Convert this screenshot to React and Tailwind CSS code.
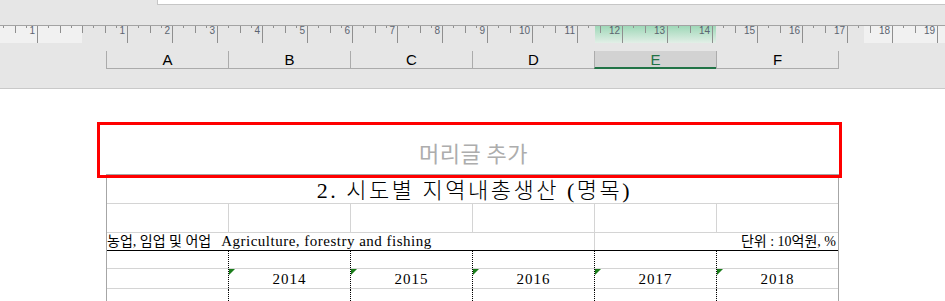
import React from "react";

const cols = ["A", "B", "C", "D", "E", "F"];
const years = ["2014", "2015", "2016", "2017", "2018"];

const serif = "font-['Liberation_Serif','Noto_Sans_CJK_KR',serif]";

// excel page-layout ruler: origin at the left margin, 45px per unit
function Ruler() {
  const ticks = [];
  for (let q = -7; q <= 79; q++) {
    const x = Math.round(82 + q * 11.25) + 0.5;
    if (x < 0 || x > 945) continue;
    let y2 = 3;
    if (q % 4 === 0 && q !== 0) y2 = 18;
    else if (q % 2 === 0) y2 = 8;
    ticks.push(<line key={q} x1={x} x2={x} y1={1} y2={y2} stroke="#8f8f8f" strokeWidth="1" />);
  }
  const labels = [{ n: 1, x: 35 }];
  for (let k = 1; k <= 19; k++) labels.push({ n: k, x: 82 + 45 * k - 2 });

  return (
    <svg width="945" height="19" className="block">
      <defs>
        <linearGradient id="sel" x1="0" y1="0" x2="0" y2="1">
          <stop offset="0" stopColor="#9fd8b8" />
          <stop offset="1" stopColor="#e2efe7" />
        </linearGradient>
      </defs>
      <rect x="0" y="1" width="82" height="17" fill="#f1f1f1" />
      <rect x="864" y="1" width="81" height="17" fill="#f1f1f1" />
      <rect x="595" y="1" width="121" height="17" fill="url(#sel)" />
      <line x1="0" x2="945" y1="0.5" y2="0.5" stroke="#a3a3a3" />
      {ticks}
      {labels.map((l, i) => (
        <text key={i} x={l.x} y="9" textAnchor="end" fontSize="10" fill="#5c6470" fontFamily="Liberation Sans, sans-serif">
          {l.n}
        </text>
      ))}
    </svg>
  );
}

export default function App() {
  return (
    <div className="relative w-[945px] h-[301px] overflow-hidden bg-white">
      {/* top chrome */}
      <div className="h-[89px] bg-[#e6e6e6] border-b border-[#c9c9c9]">
        <div className="ml-[157px] h-[5px] bg-white border-l border-b border-[#c6c6c6]" />
        <div className="mt-[20px]">
          <Ruler />
        </div>
        <div className="mt-[7px] ml-[106px] flex h-[18px] font-['Liberation_Sans',sans-serif] text-[15px] leading-none">
          {cols.map((c) =>
            c === "E" ? (
              <div key={c} className="w-[122px] h-full border-l border-[#ababab] bg-[#d2d2d2] border-b-2 border-b-[#217346] text-[#217346] flex items-center justify-center">
                {c}
              </div>
            ) : (
              <div key={c} className={`${c === "F" ? "w-[123px] border-r" : "w-[122px]"} h-full border-l border-b border-[#ababab] text-black flex items-center justify-center`}>
                {c}
              </div>
            )
          )}
        </div>
      </div>

      {/* page */}
      <div className={`ml-[106px] mt-[85px] w-[733px] border-x border-t border-[#a6a6a6] text-black ${serif}`}>
        <div className="h-[29px] border-b border-[#d4d4d4] flex items-end justify-center">
          <span className="text-[22px] leading-none pb-[1px] pl-[4px] tracking-[2.5px] font-light">2. 시도별 지역내총생산 (명목)</span>
        </div>

        <div className="h-[29px] flex border-b border-[#d4d4d4]">
          {cols.map((c, i) => (
            <div key={c} className={i < 5 ? "w-[122px] border-r border-[#d4d4d4]" : "flex-1"} />
          ))}
        </div>

        <div className="h-[18px] flex border-b border-black">
          <div className="w-[488px] border-r border-[#d4d4d4] flex items-end leading-none pb-[1px] whitespace-nowrap">
            <span className="text-[14px]">농업, 임업 및 어업</span>
            <span className="text-[15px] tracking-[0.5px] ml-[10px]">Agriculture, forestry and fishing</span>
          </div>
          <div className="flex-1 flex items-end justify-end leading-none pb-[1px] pr-[2px] text-[14px] whitespace-nowrap">
            단위 : 10억원, %
          </div>
        </div>

        <div className="h-[18px] flex border-b border-[#d4d4d4]">
          {cols.map((c, i) => (
            <div key={c} className={i < 5 ? "w-[122px] border-r border-dotted border-black" : "flex-1"} />
          ))}
        </div>

        <div className="h-[20px] flex border-b border-[#d4d4d4]">
          {cols.map((c, i) => (
            <div
              key={c}
              className={`relative flex items-center justify-center text-[15px] tracking-[1px] leading-none pt-[1px] ${i < 5 ? "w-[122px] border-r border-dotted border-black" : "flex-1"}`}
            >
              {i > 0 && (
                <>
                  <span className="absolute top-0 left-0 w-0 h-0 border-t-[6px] border-t-[#1b7d1b] border-r-[6px] border-r-transparent" />
                  {years[i - 1]}
                </>
              )}
            </div>
          ))}
        </div>

        <div className="h-[14px] flex">
          {cols.map((c, i) => (
            <div key={c} className={i < 5 ? "w-[122px] border-r border-dotted border-black" : "flex-1"} />
          ))}
        </div>
      </div>

      {/* header placeholder, selected */}
      <div className="absolute left-[97px] top-[122px] w-[745px] h-[56px] border-[3px] border-[#ff0000] flex items-center justify-center pl-[8px] pt-[3px]">
        <span className="text-[22px] leading-none tracking-[0.5px] text-[#adadad] font-['Noto_Sans_CJK_KR',sans-serif]">머리글 추가</span>
      </div>
    </div>
  );
}
